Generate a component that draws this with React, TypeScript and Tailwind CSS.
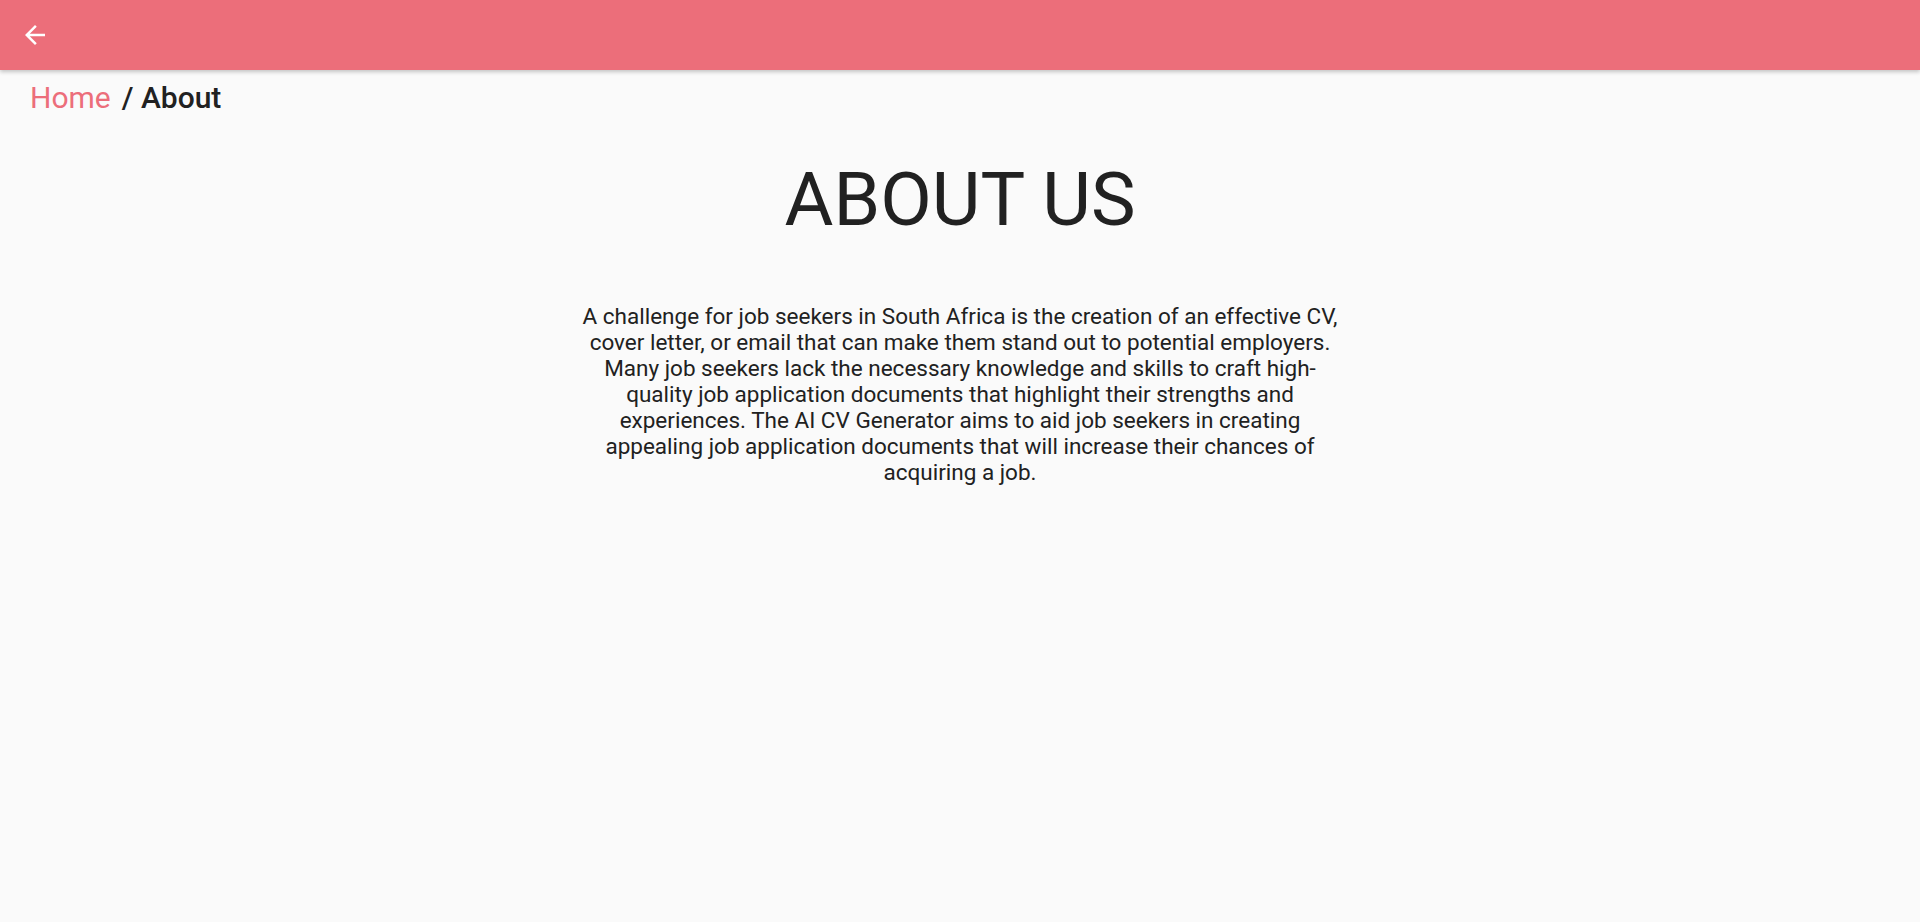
const BackArrow = () => (
  <svg width="30" height="30" viewBox="0 0 24 24" fill="currentColor">
    <path d="M20 11H7.83l5.59-5.59L12 4l-8 8 8 8 1.41-1.41L7.83 13H20v-2z" />
  </svg>
);

const App = () => {
  return (
    <div className="min-h-screen bg-[#fafafa] font-['Roboto',sans-serif] text-[#212121]">
      <header className="flex h-[70px] items-center bg-[#ec6e7a] pl-5 text-white shadow-[0_2px_4px_rgba(0,0,0,0.22)]">
        <button className="flex items-center justify-center">
          <BackArrow />
        </button>
      </header>

      <nav className="mt-[10px] flex items-center gap-[11px] pl-[30px] text-[30px] leading-[35px]">
        <span className="text-[#ec6e7a]">Home</span>
        <span className="font-medium">/ About</span>
      </nav>

      <main className="flex flex-col items-center">
        <h1 className="mt-[40px] text-[75px] leading-[88px] font-normal">
          ABOUT US
        </h1>
        <p className="mt-[60px] max-w-[766px] text-center text-[22.5px] leading-[26px]">
          A challenge for job seekers in South Africa is the creation of an
          effective CV, cover letter, or email that can make them stand out to
          potential employers. Many job seekers lack the necessary knowledge
          and skills to craft high-quality job application documents that
          highlight their strengths and experiences. The AI CV Generator aims
          to aid job seekers in creating appealing job application documents
          that will increase their chances of acquiring a job.
        </p>
      </main>
    </div>
  );
};

export default App;
